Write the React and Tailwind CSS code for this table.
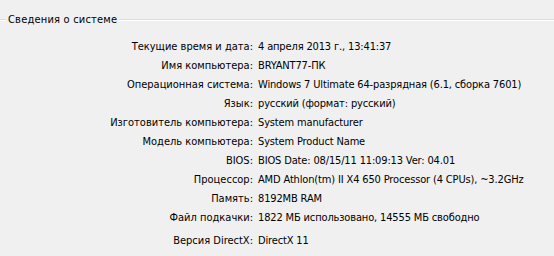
const rows = [
  ['Текущие время и дата:', '4 апреля 2013 г., 13:41:37'],
  ['Имя компьютера:', 'BRYANT77-ПК'],
  ['Операционная система:', 'Windows 7 Ultimate 64-разрядная (6.1, сборка 7601)'],
  ['Язык:', 'русский (формат: русский)'],
  ['Изготовитель компьютера:', 'System manufacturer'],
  ['Модель компьютера:', 'System Product Name'],
  ['BIOS:', 'BIOS Date: 08/15/11 11:09:13 Ver: 04.01'],
  ['Процессор:', 'AMD Athlon(tm) II X4 650 Processor (4 CPUs), ~3.2GHz'],
  ['Память:', '8192MB RAM'],
  ['Файл подкачки:', '1822 МБ использовано, 14555 МБ свободно'],
];

function EtchedLine({ className = '' }) {
  return <div className={`h-[2px] border-t border-[#d5dfe5] border-b border-b-white ${className}`} />;
}

function Row({ label, value, className = '' }) {
  return (
    <div className={`flex ${className}`}>
      <div className="w-[253px] shrink-0 text-right">{label}</div>
      <div className="pl-[5px] whitespace-nowrap tracking-[-0.15px]">{value}</div>
    </div>
  );
}

export default function App() {
  return (
    <div
      className="w-[554px] h-[256px] bg-[#f0f0f0] text-black text-[11px] overflow-hidden"
      style={{ fontFamily: '"DejaVu Sans Condensed", "Liberation Sans", Arial, sans-serif' }}
    >
      <div className="flex items-center pt-[12px]">
        <EtchedLine className="w-[6px]" />
        <span className="px-[2px] leading-[15px] tracking-[0.2px]">Сведения о системе</span>
        <EtchedLine className="flex-1" />
      </div>
      <div className="flex flex-col gap-y-[5px] pt-[13px] leading-[14px]">
        {rows.map(([label, value]) => (
          <Row key={label} label={label} value={value} />
        ))}
        <Row label="Версия DirectX:" value="DirectX 11" className="mt-[4px]" />
      </div>
    </div>
  );
}
